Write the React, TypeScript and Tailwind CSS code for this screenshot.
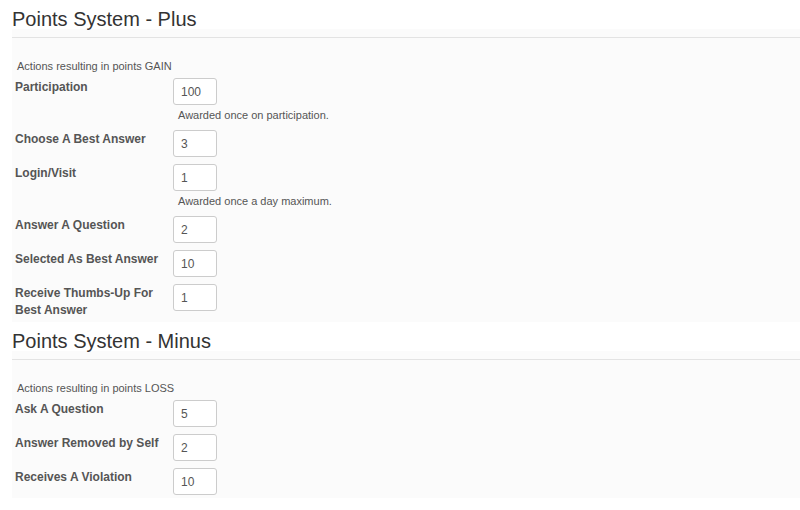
type PointsRow = {
  label: string;
  value: string;
  help?: string;
};

type PointsSection = {
  title: string;
  caption: string;
  rows: PointsRow[];
};

const sections: PointsSection[] = [
  {
    title: "Points System - Plus",
    caption: "Actions resulting in points GAIN",
    rows: [
      { label: "Participation", value: "100", help: "Awarded once on participation." },
      { label: "Choose A Best Answer", value: "3" },
      { label: "Login/Visit", value: "1", help: "Awarded once a day maximum." },
      { label: "Answer A Question", value: "2" },
      { label: "Selected As Best Answer", value: "10" },
      { label: "Receive Thumbs-Up For Best Answer", value: "1" },
    ],
  },
  {
    title: "Points System - Minus",
    caption: "Actions resulting in points LOSS",
    rows: [
      { label: "Ask A Question", value: "5" },
      { label: "Answer Removed by Self", value: "2" },
      { label: "Receives A Violation", value: "10" },
    ],
  },
];

function PointsField({ row }: { row: PointsRow }) {
  return (
    <div className="flex items-start">
      <label className="mt-[1px] w-[161px] shrink-0 pl-[3px] text-[12px] font-bold leading-[17px] text-[#555]">
        {row.label}
      </label>

      <div className="flex flex-col">
        <input
          type="text"
          defaultValue={row.value}
          className="box-border h-[27px] w-[44px] rounded-[3px] border border-[#ccc] bg-white pl-[7px] text-[12px] text-[#555] outline-none"
        />
        {row.help && (
          <p className="ml-[5px] mt-[3px] whitespace-nowrap text-[11px] leading-[15px] text-[#555]">
            {row.help}
          </p>
        )}
      </div>
    </div>
  );
}

function PointsPanel({ section }: { section: PointsSection }) {
  return (
    <section>
      <h2 className="h-[29px] pl-[12px] pt-[10px] text-[20px] font-normal leading-[19px] text-[#333]">
        {section.title}
      </h2>

      <div className="ml-[12px] bg-[#fbfbfb] pb-[3px] pt-[8px]">
        <div className="border-t border-[#e3e3e3] pt-[21px]">
          <p className="pl-[5px] text-[11px] leading-[14px] text-[#555]">
            {section.caption}
          </p>

          <div className="mt-[5px] flex flex-col gap-[7px]">
            {section.rows.map((row) => (
              <PointsField key={row.label} row={row} />
            ))}
          </div>
        </div>
      </div>
    </section>
  );
}

export default function App() {
  return (
    <div className="min-h-[510px] w-[800px] bg-white font-['Liberation_Sans',Arial,sans-serif]">
      {sections.map((section) => (
        <PointsPanel key={section.title} section={section} />
      ))}
    </div>
  );
}
